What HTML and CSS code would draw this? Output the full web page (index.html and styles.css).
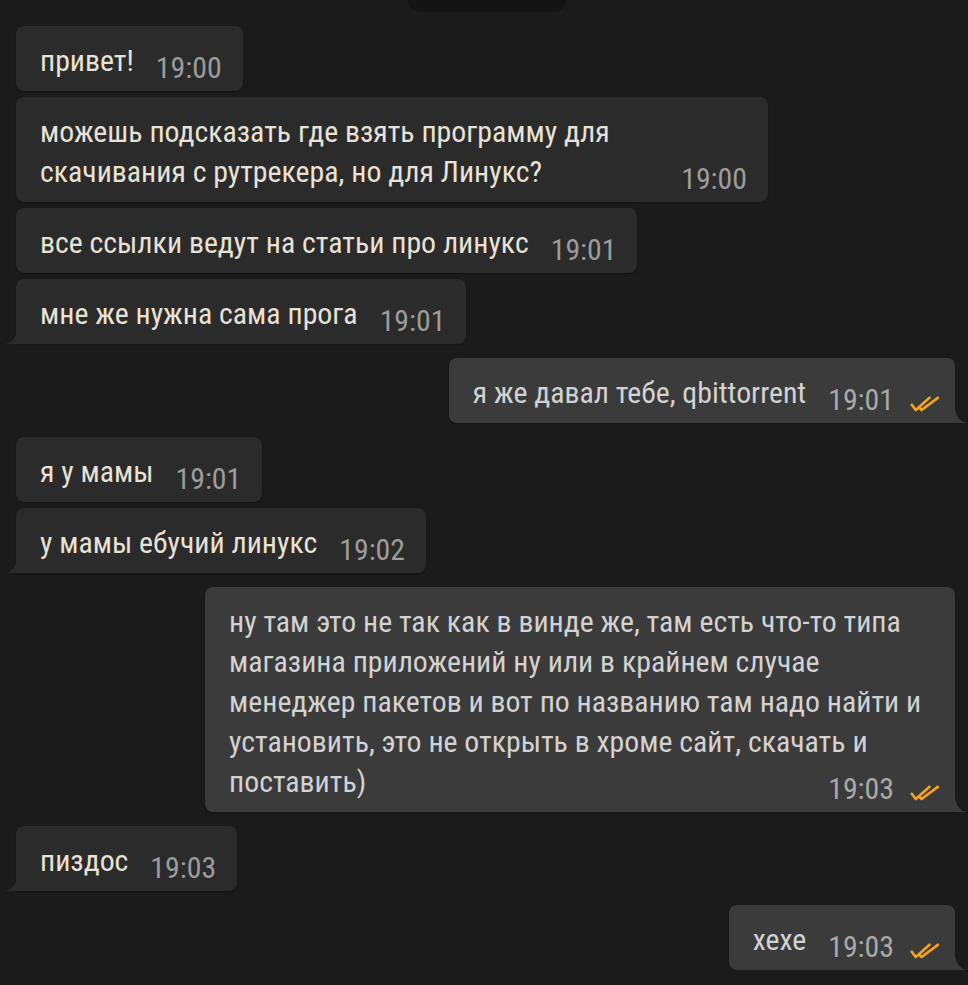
FILE: index.html
```html
<!DOCTYPE html>
<html lang="ru">
<head>
    <meta charset="UTF-8">
    <meta name="viewport" content="width=device-width, initial-scale=1.0">
    <title>Чат</title>
    <link rel="stylesheet" href="styles.css">
</head>
<body>
    <div class="date-pill"></div>

    <div class="chat">
        <div class="group in">
            <div class="msg">привет!<span class="time">19:00</span></div>
            <div class="msg">можешь подсказать где взять программу для скачивания с рутрекера, но для Линукс?<span class="time">19:00</span></div>
            <div class="msg">все ссылки ведут на статьи про линукс<span class="time">19:01</span></div>
            <div class="msg tail">мне же нужна сама прога<span class="time">19:01</span></div>
        </div>

        <div class="group out">
            <div class="msg tail">я же давал тебе, qbittorrent<span class="time">19:01<svg class="ticks" viewBox="0 0 30 16"><path d="M1.8 8.8 L5.8 14 L19.5 1.8 M9.6 12 L11.6 14 L27.8 1.8"/></svg></span></div>
        </div>

        <div class="group in">
            <div class="msg">я у мамы<span class="time">19:01</span></div>
            <div class="msg tail">у мамы ебучий линукс<span class="time">19:02</span></div>
        </div>

        <div class="group out">
            <div class="msg tail">ну там это не так как в винде же, там есть что-то типа магазина приложений ну или в крайнем случае менеджер пакетов и вот по названию там надо найти и установить, это не открыть в хроме сайт, скачать и поставить)<span class="time">19:03<svg class="ticks" viewBox="0 0 30 16"><path d="M1.8 8.8 L5.8 14 L19.5 1.8 M9.6 12 L11.6 14 L27.8 1.8"/></svg></span></div>
        </div>

        <div class="group in">
            <div class="msg tail">пиздос<span class="time">19:03</span></div>
        </div>

        <div class="group out">
            <div class="msg tail">хехе<span class="time">19:03<svg class="ticks" viewBox="0 0 30 16"><path d="M1.8 8.8 L5.8 14 L19.5 1.8 M9.6 12 L11.6 14 L27.8 1.8"/></svg></span></div>
        </div>
    </div>
</body>
</html>
```

FILE: styles.css
```css
body {
    margin: 0;
    background-color: #1b1b1b;
    font-family: "Roboto Condensed", Roboto, sans-serif;
    font-size: 29.8px;
    overflow: hidden;
}

/* cut-off date badge at the very top */
.date-pill {
    width: 158px;
    height: 12px;
    margin: 0 auto 14px 408px;
    background-color: #141414;
    border-radius: 0 0 16px 16px;
}

.chat {
    display: flex;
    flex-direction: column;
    gap: 14px;
    padding: 0 13px 0 16px;
}

.group {
    display: flex;
    flex-direction: column;
    gap: 6px;
}
.group.in { align-items: flex-start; }
.group.out { align-items: flex-end; }

.msg {
    position: relative;
    max-width: 707px;
    padding: 15px 21px 10px 24px;
    line-height: 40px;
    border-radius: 8px;
    box-shadow: 0 1px 2px rgba(0, 0, 0, 0.35);
}
.in .msg {
    background-color: #2b2b2b;
    color: #e8e1d6;
}
.out .msg {
    max-width: 711px;
    padding-right: 15px;
    background-color: #3b3b3b;
    color: #d2d2d2;
}

.time {
    float: right;
    position: relative;
    top: 7px;
    margin-left: 22px;
    color: #9c9c9c;
    white-space: nowrap;
}
.out .time { color: #a9a9a9; }

.ticks {
    width: 30px;
    height: 16px;
    margin-left: 16px;
    vertical-align: -2px;
    fill: none;
    stroke: #f5a21c;
    stroke-width: 2.7;
    stroke-linecap: round;
    stroke-linejoin: round;
}

/* bubble tails */
.in .msg.tail { border-bottom-left-radius: 0; }
.out .msg.tail { border-bottom-right-radius: 0; }
.msg.tail::before {
    content: "";
    position: absolute;
    bottom: 0;
    width: 12px;
    height: 15px;
}
.in .msg.tail::before {
    left: -11px;
    background: radial-gradient(ellipse 12px 15px at 0 0, transparent 96%, #2b2b2b 100%);
}
.out .msg.tail::before {
    right: -12px;
    background: radial-gradient(ellipse 12px 15px at 100% 0, transparent 96%, #3b3b3b 100%);
}
```
